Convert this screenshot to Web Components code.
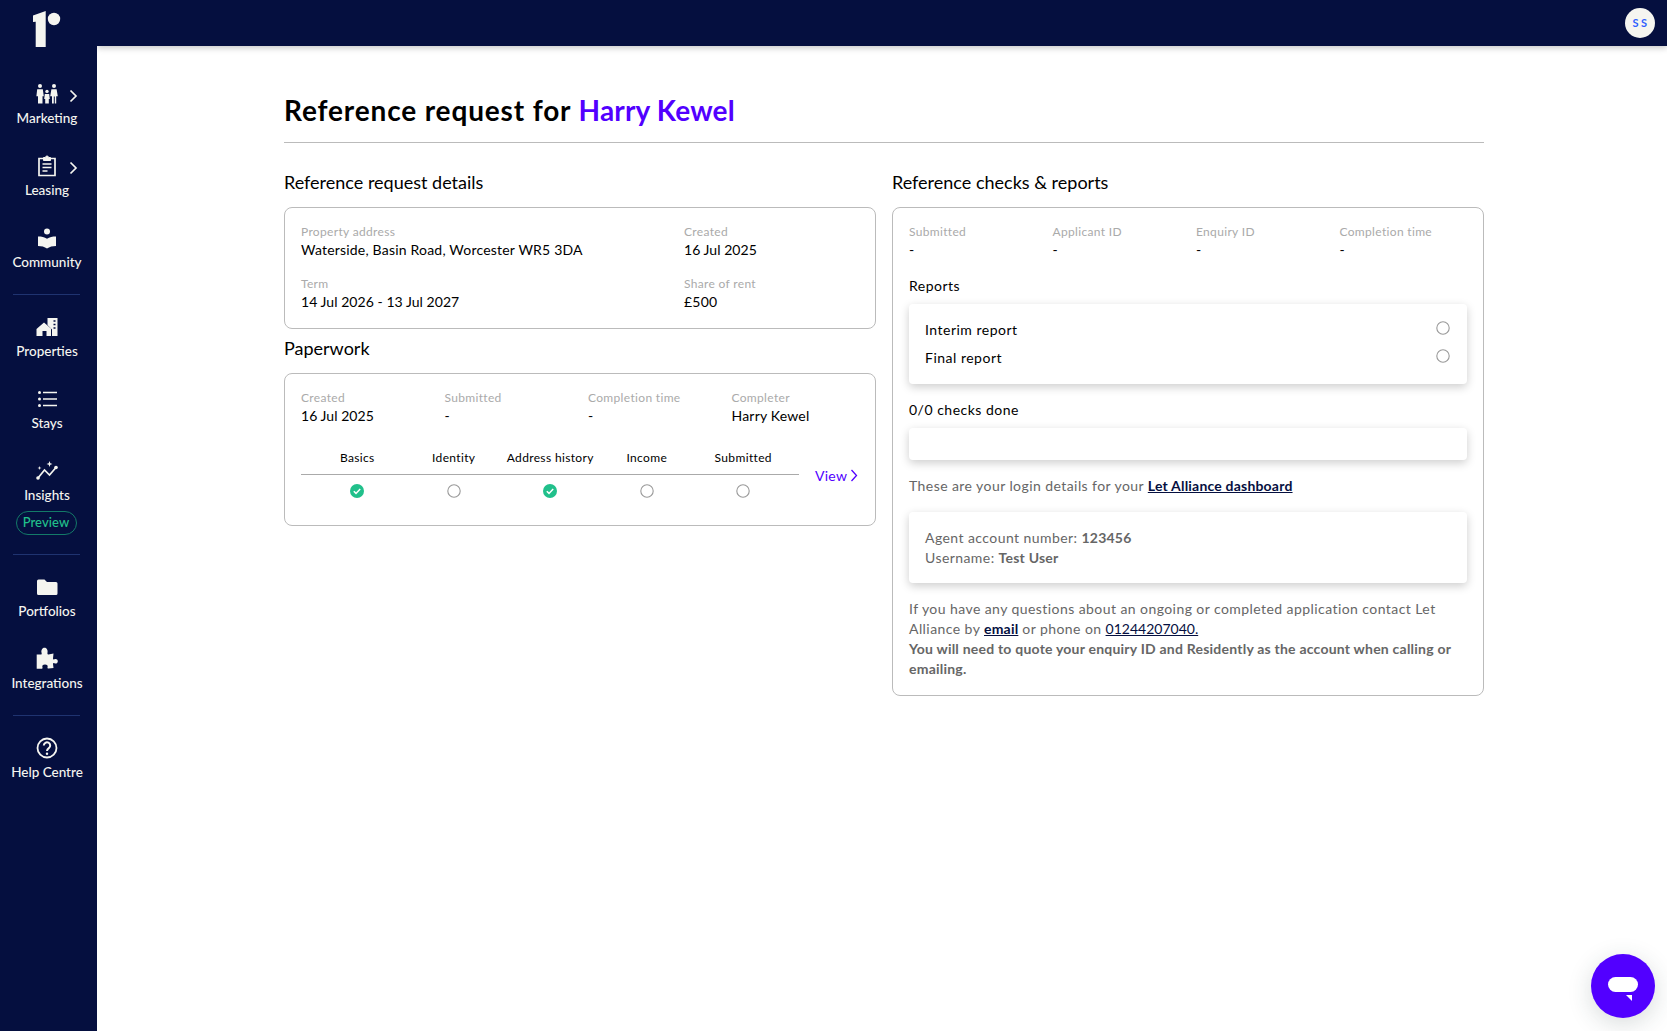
<!DOCTYPE html>
<html lang="en">
<head>
<meta charset="utf-8">
<title>Reference request</title>
<style>
  html, body { margin: 0; height: 100%; background: #fff; }
  body { font-family: Lato, "Liberation Sans", sans-serif; color: #000; }
</style>
</head>
<body>
<app-shell>
  <side-nav slot="nav">
    <nav-item label="Marketing" more>
      <svg viewBox="0 0 24 24" fill="#f5f5f0"><circle cx="5" cy="4" r="2"/><path d="M2.2 7.2h5.6l1 7h-1.3v7.3H3v-7.3H1.4z"/><circle cx="12" cy="9.4" r="1.7"/><path d="M9.8 12h4.4l.6 5h-1v4.500h-3.600V17h-1z"/><circle cx="19" cy="4" r="2"/><path d="M16.400 7.200h5.200l1.200 7h-1.600v7.300h-1.400v-7h-1v7H17v-7.300h-1.800z"/></svg>
    </nav-item>
    <nav-item label="Leasing" more>
      <svg viewBox="0 0 24 24" fill="none" stroke="#f5f5f0" stroke-width="1.7"><path d="M8.500 4.500H4v17h16v-17h-4.500"/><path d="M8.500 3.500h2a1.500 1.500 0 0 1 3 0h2v3h-7z" fill="#f5f5f0" stroke-width="1"/><path d="M7.500 10h9M7.500 13.500h9M7.500 17h5"/></svg>
    </nav-item>
    <nav-item label="Community">
      <svg viewBox="0 0 24 24" fill="#f5f5f0"><circle cx="12" cy="5.500" r="3"/><path d="M3 10.500c3.500 0 6.500.6 9 2.300 2.500-1.700 5.500-2.300 9-2.300v9.500c-3.500 0-6.500.8-9 2.500-2.500-1.700-5.500-2.500-9-2.500z"/></svg>
    </nav-item>
    <nav-rule></nav-rule>
    <nav-item label="Properties">
      <svg viewBox="0 0 24 24" fill="#f5f5f0"><path d="M12.500 3h10v18h-5.500v-6.500L12.500 10z"/><path d="M1.500 14L9 7.500 16 13.500V21h-4.500v-5h-4v5H1.500z"/><path d="M18.500 6h2M18.500 9.500h2M18.500 13h2" stroke="#050f3f" stroke-width="1.300"/></svg>
    </nav-item>
    <nav-item label="Stays">
      <svg viewBox="0 0 24 24" fill="#f5f5f0"><circle cx="4.500" cy="5.500" r="1.500"/><circle cx="4.500" cy="12" r="1.500"/><circle cx="4.500" cy="18.500" r="1.500"/><path d="M8 4.700h14v1.600H8zM8 11.200h14v1.600H8zM8 17.700h14v1.600H8z"/></svg>
    </nav-item>
    <nav-item label="Insights" preview>
      <svg viewBox="0 0 24 24" fill="#f5f5f0"><path d="M3 19l6.500-8 5 5L21 8.500" fill="none" stroke="#f5f5f0" stroke-width="1.700"/><circle cx="3" cy="19" r="1.800"/><circle cx="21" cy="8.500" r="1.800"/><path d="M14.500 2l.8 2.200 2.200.8-2.200.8-.8 2.200-.8-2.200-2.200-.8 2.200-.8zM4.500 7l.5 1.500 1.500.5-1.500.5-.5 1.500-.5-1.500L2.500 9l1.500-.5z"/></svg>
    </nav-item>
    <nav-rule></nav-rule>
    <nav-item label="Portfolios">
      <svg viewBox="0 0 24 24" fill="#f5f5f0"><path d="M2 6a1.500 1.500 0 0 1 1.500-1.500h6L12 7h9a1.500 1.500 0 0 1 1.500 1.500v10A1.500 1.500 0 0 1 21 20H3.500A1.500 1.500 0 0 1 2 18.500z"/></svg>
    </nav-item>
    <nav-item label="Integrations">
      <svg viewBox="0 0 24 24" fill="#f5f5f0"><path d="M6 7.500C6.500 7.500 7 7 6.500 5.500 6 3.500 7 .7 9.500 .7 12 .7 13 3.500 12.500 5.500 12.200 7 12.700 7.500 13.500 7.500L18.500 6.500 18 11.500C18 12.500 18.600 12.800 19.400 12.300 20.600 11.600 22.800 12 22.800 14.300 22.800 16.600 20.600 17 19.400 16.300 18.600 15.800 18 16.100 18 17L18.500 21 13.500 21.500C12.500 21.500 12.300 20.800 12.600 20 13 18.800 12.200 17.500 10 17.500 7.800 17.500 7 18.800 7.400 20 7.700 20.800 7.500 21.800 6.500 21.800L1.700 21.800V7.500Z"/></svg>
    </nav-item>
    <nav-rule></nav-rule>
    <nav-item label="Help Centre">
      <svg viewBox="0 0 24 24" fill="none" stroke="#f5f5f0" stroke-width="1.800"><circle cx="12" cy="12" r="9.500"/><path d="M8.800 9.500a3.200 3.200 0 1 1 5 2.700c-1.200.8-1.800 1.400-1.800 2.800" stroke-width="2"/><circle cx="12" cy="17.800" r="1.200" fill="#f5f5f0" stroke="none"/></svg>
    </nav-item>
  </side-nav>

  <top-bar slot="top" initials="SS"></top-bar>

  <page-title>Reference request for <b>Harry Kewel</b></page-title>

  <div style="display:grid;grid-template-columns:592px 592px;gap:16px">
    <div>
      <section-title>Reference request details</section-title>
      <info-card>
        <field-grid cols="367px 1fr">
          <info-field label="Property address">Waterside, Basin Road, Worcester WR5 3DA</info-field>
          <info-field label="Created" num>16 Jul 2025</info-field>
          <info-field label="Term" num>14 Jul 2026 - 13 Jul 2027</info-field>
          <info-field label="Share of rent">£500</info-field>
        </field-grid>
      </info-card>
      <section-title next>Paperwork</section-title>
      <info-card>
        <field-grid cols="1fr 1fr 1fr 1fr">
          <info-field label="Created" num>16 Jul 2025</info-field>
          <info-field label="Submitted">-</info-field>
          <info-field label="Completion time">-</info-field>
          <info-field label="Completer">Harry Kewel</info-field>
        </field-grid>
        <step-table steps="Basics:1,Identity:0,Address history:1,Income:0,Submitted:0"></step-table>
      </info-card>
    </div>
    <div>
      <section-title>Reference checks &amp; reports</section-title>
      <info-card>
        <field-grid cols="1fr 1fr 1fr 1fr">
          <info-field label="Submitted">-</info-field>
          <info-field label="Applicant ID">-</info-field>
          <info-field label="Enquiry ID">-</info-field>
          <info-field label="Completion time">-</info-field>
        </field-grid>
        <block-label>Reports</block-label>
        <shadow-box tight>
          <report-row>Interim report</report-row>
          <report-row>Final report</report-row>
        </shadow-box>
        <block-label>0/0 checks done</block-label>
        <shadow-box></shadow-box>
        <grey-text gap>These are your login details for your <a-link>Let Alliance dashboard</a-link></grey-text>
        <shadow-box gap login>
          <grey-text>Agent account number: <strong>123456</strong><br>Username: <strong>Test User</strong></grey-text>
        </shadow-box>
        <grey-text gap>If you have any questions about an ongoing or completed application contact Let<br>Alliance by <a-link>email</a-link> or phone on <a-link thin>01244207040.</a-link><br><strong>You will need to quote your enquiry ID and Residently as the account when calling or<br>emailing.</strong></grey-text>
      </info-card>
    </div>
  </div>
  <chat-button slot="chat"></chat-button>
</app-shell>

<script>
// tiny helper so each element just declares css + html
function shadow(el, html) {
  el.attachShadow({ mode: 'open' }).innerHTML = html;
}

const circle = '<svg width="14" height="14" viewBox="0 0 14 14"><circle cx="7" cy="7" r="6.200" fill="none" stroke="#999" stroke-width="1.100"/></svg>';
const tick = '<svg width="14" height="14" viewBox="0 0 14 14"><circle cx="7" cy="7" r="7" fill="#21c08b"/><path d="M3.800 7.200l2.200 2.200 4.200-4.400" fill="none" stroke="#fff" stroke-width="1.500"/></svg>';

class AppShell extends HTMLElement {
  constructor() {
    super();
    shadow(this, `
      <style>
        :host { display: flex; min-height: 100vh; }
        .main { flex: 1; min-width: 0; }
        .content { width: 1200px; padding: 44px 0 0 187px; }
      </style>
      <slot name="nav"></slot>
      <div class="main">
        <slot name="top"></slot>
        <div class="content"><slot></slot></div>
      </div>
      <slot name="chat"></slot>`);
  }
}

class SideNav extends HTMLElement {
  constructor() {
    super();
    shadow(this, `
      <style>
        :host { display: flex; flex-direction: column; gap: 4px; width: 97px; flex: none; background: #050f3f; color: #f5f5f0; box-sizing: border-box; padding: 82px 3px 0 0; position: relative; z-index: 2; }
        svg { position: absolute; left: 33px; top: 11px; }
      </style>
      <svg width="28" height="36" viewBox="0 0 28 36" fill="#f5f5f0"><path d="M0 4.500L12.700 0v36H2.700V10.800L0 11z"/><circle cx="21" cy="8" r="6.200"/></svg>
      <slot></slot>`);
  }
}

class NavRule extends HTMLElement {
  constructor() {
    super();
    shadow(this, `
      <style>
        :host { display: block; height: 1px; margin: -4px 13px 16px; width: 67px; background: #1f3370; }
      </style>`);
  }
}

class NavItem extends HTMLElement {
  constructor() {
    super();
    const chevron = this.hasAttribute('more')
      ? '<svg class="more" width="9" height="14" viewBox="0 0 9 14"><path d="M1.500 1.500L7 7l-5.500 5.500" fill="none" stroke="#f5f5f0" stroke-width="1.700"/></svg>'
      : '';
    const pill = this.hasAttribute('preview') ? '<span class="pill">Preview</span>' : '';
    shadow(this, `
      <style>
        :host { display: flex; flex-direction: column; align-items: center; position: relative; padding-bottom: 22px; font-size: 13.500px; }
        ::slotted(svg) { width: 24px; height: 24px; display: block; }
        .label { line-height: 20px; margin-top: 2px; white-space: nowrap; font-weight: 500; }
        .more { position: absolute; left: 69px; top: 7px; }
        .pill { box-sizing: border-box; width: 61px; height: 24px; margin: 6px 2px -3px 0; line-height: 21px; text-align: center; border: 1px solid #137a68; border-radius: 12px; color: #21c08b; font-size: 13px; font-weight: 500; letter-spacing: .1px; }
      </style>
      <slot></slot>
      ${chevron}
      <span class="label">${this.getAttribute('label')}</span>
      ${pill}`);
  }
}

class TopBar extends HTMLElement {
  constructor() {
    super();
    shadow(this, `
      <style>
        :host { display: flex; justify-content: flex-end; align-items: center; height: 46px; box-sizing: border-box; padding-right: 12px; background: #050f3f; box-shadow: 0 2px 6px rgba(0,0,0,.22); }
        .avatar { width: 30px; height: 30px; border-radius: 50%; background: #f5f5f0; color: #2f5fff; font-size: 11px; font-weight: 700; letter-spacing: 2.500px; text-indent: 2px; line-height: 30px; text-align: center; }
      </style>
      <div class="avatar">${this.getAttribute('initials')}</div>`);
  }
}

class PageTitle extends HTMLElement {
  constructor() {
    super();
    shadow(this, `
      <style>
        :host { display: block; font-size: 28px; line-height: 40px; font-weight: 700; letter-spacing: .85px; padding-bottom: 12px; border-bottom: 1px solid #bbb; margin-bottom: 28px; }
        ::slotted(b) { color: #5200ff; font-weight: 700; letter-spacing: .2px; }
      </style>
      <slot></slot>`);
  }
}

class SectionTitle extends HTMLElement {
  constructor() {
    super();
    shadow(this, `
      <style>
        :host { display: block; font-size: 18px; line-height: 22px; margin-bottom: 14px; }
        :host([next]) { margin-top: 8px; }
      </style>
      <slot></slot>`);
  }
}

class InfoCard extends HTMLElement {
  constructor() {
    super();
    shadow(this, `
      <style>
        :host { display: block; box-sizing: border-box; padding: 16px; border: 1px solid #bbb; border-radius: 8px; font-size: 14px; letter-spacing: .43px; }
      </style>
      <slot></slot>`);
  }
}

class FieldGrid extends HTMLElement {
  constructor() {
    super();
    shadow(this, `
      <style>
        :host { display: grid; grid-template-columns: ${this.getAttribute('cols')}; gap: 16px; }
      </style>
      <slot></slot>`);
  }
}

class InfoField extends HTMLElement {
  constructor() {
    super();
    shadow(this, `
      <style>
        :host { display: block; min-width: 0; }
        .k { font-size: 12px; line-height: 16px; color: #aaa; letter-spacing: .33px; }
        .v { line-height: 20px; color: #000; letter-spacing: .2px; }
        :host([num]) .v { letter-spacing: .05px; }
      </style>
      <div class="k">${this.getAttribute('label')}</div>
      <div class="v"><slot></slot></div>`);
  }
}

class StepTable extends HTMLElement {
  constructor() {
    super();
    const steps = this.getAttribute('steps').split(',').map(s => s.split(':'));
    shadow(this, `
      <style>
        :host { display: flex; margin-top: 16px; }
        .t { flex: none; width: 498px; box-sizing: border-box; }
        .row { display: grid; grid-template-columns: repeat(5, 96.500px); padding: 0 8px; text-align: center; }
        .head { height: 33px; line-height: 32px; font-size: 12px; letter-spacing: .35px; border-bottom: 1px solid #aaa; box-sizing: border-box; }
        .icons { height: 34px; box-sizing: border-box; padding-bottom: 2px; align-items: center; }
        .icons svg { display: block; margin: 0 auto; }
        .view { display: flex; align-items: center; gap: 3px; height: 20px; margin: 23px 0 0 16px; color: #5200ff; letter-spacing: .25px; }
      </style>
      <div class="t">
        <div class="row head">${steps.map(s => `<span>${s[0]}</span>`).join('')}</div>
        <div class="row icons">${steps.map(s => s[1] == '1' ? tick : circle).join('')}</div>
      </div>
      <div class="view">View <svg width="8" height="13" viewBox="0 0 8 13"><path d="M1.500 1l5 5.500-5 5.500" fill="none" stroke="#5200ff" stroke-width="1.300"/></svg></div>`);
  }
}

class BlockLabel extends HTMLElement {
  constructor() {
    super();
    shadow(this, `
      <style>
        :host { display: block; line-height: 20px; margin: 16px 0 8px; letter-spacing: .5px; }
      </style>
      <slot></slot>`);
  }
}

class ShadowBox extends HTMLElement {
  constructor() {
    super();
    shadow(this, `
      <style>
        :host { display: block; padding: 16px; min-height: 32px; box-sizing: border-box; border-radius: 4px; background: #fff; box-shadow: 0 3px 10px rgba(0,0,0,.2); }
        :host([tight]) { padding: 12px 16px; letter-spacing: .5px; }
        :host([gap]) { margin-top: 16px; }
        :host([login]) { padding-bottom: 15px; }
      </style>
      <slot></slot>`);
  }
}

class ReportRow extends HTMLElement {
  constructor() {
    super();
    shadow(this, `
      <style>
        :host { display: flex; justify-content: space-between; height: 28px; line-height: 28px; }
        svg { margin: 5px 1px 0 0; }
      </style>
      <slot></slot>${circle}`);
  }
}

class GreyText extends HTMLElement {
  constructor() {
    super();
    shadow(this, `
      <style>
        :host { display: block; line-height: 20px; color: #666; }
        :host([gap]) { margin-top: 16px; }
        ::slotted(strong) { font-weight: 700; letter-spacing: .22px; }
      </style>
      <slot></slot>`);
  }
}

class ALink extends HTMLElement {
  constructor() {
    super();
    shadow(this, `
      <style>
        :host { color: #050f3f; font-weight: 700; text-decoration: underline; cursor: pointer; letter-spacing: .2px; }
        :host([thin]) { font-weight: 400; letter-spacing: 0; }
      </style>
      <slot></slot>`);
  }
}

class ChatButton extends HTMLElement {
  constructor() {
    super();
    shadow(this, `
      <style>
        :host { position: fixed; right: 12px; bottom: 13px; width: 64px; height: 64px; border-radius: 50%; background: #5200ff; box-shadow: 0 6px 24px rgba(40,60,60,.18); z-index: 5; }
        svg { display: block; }
      </style>
      <svg width="64" height="64" viewBox="0 0 64 64" fill="#fff"><rect x="17" y="23" width="30" height="15" rx="7.500"/><path d="M35 41h6v6z"/></svg>`);
  }
}

customElements.define('app-shell', AppShell);
customElements.define('side-nav', SideNav);
customElements.define('nav-rule', NavRule);
customElements.define('nav-item', NavItem);
customElements.define('top-bar', TopBar);
customElements.define('page-title', PageTitle);
customElements.define('section-title', SectionTitle);
customElements.define('info-card', InfoCard);
customElements.define('field-grid', FieldGrid);
customElements.define('info-field', InfoField);
customElements.define('step-table', StepTable);
customElements.define('block-label', BlockLabel);
customElements.define('shadow-box', ShadowBox);
customElements.define('report-row', ReportRow);
customElements.define('grey-text', GreyText);
customElements.define('a-link', ALink);
customElements.define('chat-button', ChatButton);
</script>
</body>
</html>
